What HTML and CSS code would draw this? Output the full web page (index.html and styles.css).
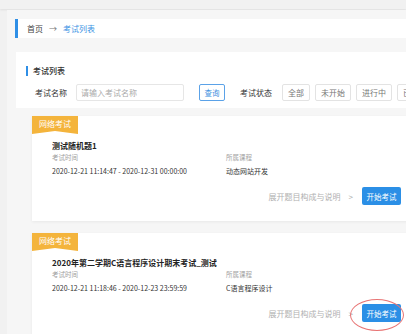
FILE: index.html
```html
<!DOCTYPE html>
<html lang="zh-CN">
  <head>
    <meta charset="UTF-8" />
    <meta name="viewport" content="width=device-width, initial-scale=1.0" />
    <title>考试列表</title>
    <link rel="stylesheet" href="styles.css">
  </head>
  <body>
    <div class="topbar"></div>
    <div class="main">
      <!-- 面包屑 -->
      <div class="crumb">
        <span class="crumb-home">首页</span>
        <span class="crumb-arrow">→</span>
        <span class="crumb-cur">考试列表</span>
      </div>

      <div class="panel">
        <div class="panel-title">考试列表</div>
        <div class="search-row">
          <span class="search-label">考试名称</span>
          <input class="search-input" type="text" placeholder="请输入考试名称" />
          <button class="btn-query" type="button">查询</button>
          <span class="search-label status-label">考试状态</span>
          <div class="status-group">
            <button class="btn-status" type="button">全部</button>
            <button class="btn-status" type="button">未开始</button>
            <button class="btn-status" type="button">进行中</button>
            <button class="btn-status" type="button">已结束</button>
          </div>
        </div>
      </div>

      <div class="exam-list">
        <div class="exam-card">
          <div class="exam-tag">网络考试</div>
          <div class="exam-body">
            <div class="exam-name">测试随机题1</div>
            <div class="exam-info">
              <div class="info-col">
                <div class="info-label">考试时间</div>
                <div class="info-value">2020-12-21 11:14:47 - 2020-12-31 00:00:00</div>
              </div>
              <div class="info-col">
                <div class="info-label">所属课程</div>
                <div class="info-value">动态网站开发</div>
              </div>
            </div>
            <div class="exam-foot">
              <span class="exam-more">展开题目构成与说明</span>
              <span class="exam-more-arrow">&gt;</span>
              <span class="start-wrap">
                <button class="btn-start" type="button">开始考试</button>
              </span>
            </div>
          </div>
        </div>

        <div class="exam-card">
          <div class="exam-tag">网络考试</div>
          <div class="exam-body">
            <div class="exam-name">2020年第二学期C语言程序设计期末考试_测试</div>
            <div class="exam-info">
              <div class="info-col">
                <div class="info-label">考试时间</div>
                <div class="info-value">2020-12-21 11:18:46 - 2020-12-23 23:59:59</div>
              </div>
              <div class="info-col">
                <div class="info-label">所属课程</div>
                <div class="info-value">C语言程序设计</div>
              </div>
            </div>
            <div class="exam-foot">
              <span class="exam-more">展开题目构成与说明</span>
              <span class="exam-more-arrow">&gt;</span>
              <span class="start-wrap">
                <button class="btn-start" type="button">开始考试</button>
                <span class="mark-circle"></span>
              </span>
            </div>
          </div>
        </div>
      </div>
    </div>
  </body>
</html>
```

FILE: styles.css
```css
html,
body {
  margin: 0;
  padding: 0;
  overflow: hidden;
}

body {
  width: 406px;
  height: 334px;
  background: #f1f1f1;
  font-family: "Noto Sans CJK SC", "Liberation Sans", sans-serif;
  color: #333;
}

.topbar {
  height: 9px;
  background: #f1f1f1;
  box-shadow: 0 1px 2px rgba(0, 0, 0, 0.08);
}

.main {
  margin: 1px 0 0 7px;
  width: 420px;
  height: 400px;
  background: #f6f6f6;
  padding: 9px 0 0 8px;
  box-sizing: border-box;
}

/* 面包屑 */
.crumb {
  height: 19px;
  background: #fff;
  border-left: 3px solid #2f8fe6;
  padding-left: 9px;
  display: flex;
  align-items: center;
  gap: 6px;
  font-size: 8px;
}

.crumb-home {
  color: #444;
}

.crumb-arrow {
  color: #777;
  font-size: 8px;
}

.crumb-cur {
  color: #3d93e4;
}

/* 筛选区 */
.panel {
  margin: 14px 0 0 1px;
  background: #fff;
  padding: 14px 0 7px;
}

.panel-title {
  margin-left: 10px;
  height: 10px;
  line-height: 10px;
  border-left: 2px solid #2f8fe6;
  padding-left: 5px;
  font-size: 8px;
  font-weight: 500;
  color: #333;
}

.search-row {
  margin: 8px 0 0 19px;
  height: 17px;
  display: flex;
  align-items: center;
}

.search-row > * {
  flex-shrink: 0;
}

.search-label {
  font-size: 8px;
  color: #333;
  white-space: nowrap;
}

.search-input {
  margin-left: 9px;
  width: 108px;
  height: 17px;
  box-sizing: border-box;
  border: 1px solid #e6e6e6;
  border-radius: 2px;
  padding: 0 4px;
  font-family: inherit;
  font-size: 8px;
  outline: none;
}

.search-input::placeholder {
  color: #aaa;
}

.btn-query,
.btn-status {
  height: 17px;
  box-sizing: border-box;
  background: #fff;
  border-radius: 2px;
  font-family: inherit;
  font-size: 7.5px;
  white-space: nowrap;
  flex-shrink: 0;
}

.btn-query {
  margin-left: 15px;
  width: 26px;
  padding: 0;
  border: 1px solid #5ba2e8;
  color: #3d8fe0;
}

.status-label {
  margin-left: 15px;
}

.status-group {
  margin-left: 10px;
  display: flex;
  gap: 5px;
}

.btn-status {
  border: 1px solid #e3e3e3;
  color: #777;
  font-size: 8px;
  padding: 0 5px;
}

/* 考试卡片 */
.exam-list {
  margin: 8px 0 0 17px;
  display: flex;
  flex-direction: column;
  gap: 12px;
}

.exam-card {
  width: 379px;
  background: #fff;
  box-shadow: 0 1px 3px rgba(0, 0, 0, 0.06);
}

.exam-tag {
  width: 46px;
  height: 18px;
  line-height: 16px;
  background: #f4b43c;
  color: #fff;
  font-size: 8px;
  text-align: center;
  clip-path: polygon(0 0, 100% 0, 100% 100%, 50% 84%, 0 100%);
}

.exam-body {
  padding: 6px 10px 16px 20px;
}

.exam-name {
  line-height: 11px;
  font-size: 8px;
  font-weight: 700;
  color: #222;
  white-space: nowrap;
}

.exam-info {
  display: flex;
}

.info-col:first-child {
  width: 174px;
}

.info-label {
  margin-top: 1px;
  line-height: 10px;
  font-size: 6.5px;
  color: #a0a0a0;
}

.info-value {
  margin-top: 4px;
  line-height: 10px;
  font-size: 7px;
  color: #333;
  white-space: nowrap;
}

.exam-foot {
  margin-top: 11px;
  height: 18px;
  display: flex;
  align-items: center;
  justify-content: flex-end;
}

.exam-more {
  font-size: 8px;
  color: #b0b0b0;
}

.exam-more-arrow {
  margin-left: 8px;
  font-size: 8px;
  color: #aaa;
}

.start-wrap {
  position: relative;
  margin-left: 9px;
  display: flex;
}

.btn-start {
  width: 39px;
  height: 18px;
  border: none;
  border-radius: 2px;
  background: #2b8fe6;
  color: #fff;
  font-family: inherit;
  font-size: 7.5px;
  padding: 0;
}

/* 标注红圈 */
.mark-circle {
  position: absolute;
  left: -12px;
  top: -5px;
  width: 52px;
  height: 30px;
  border: 1px solid #e87474;
  border-radius: 50%;
  pointer-events: none;
}
```
